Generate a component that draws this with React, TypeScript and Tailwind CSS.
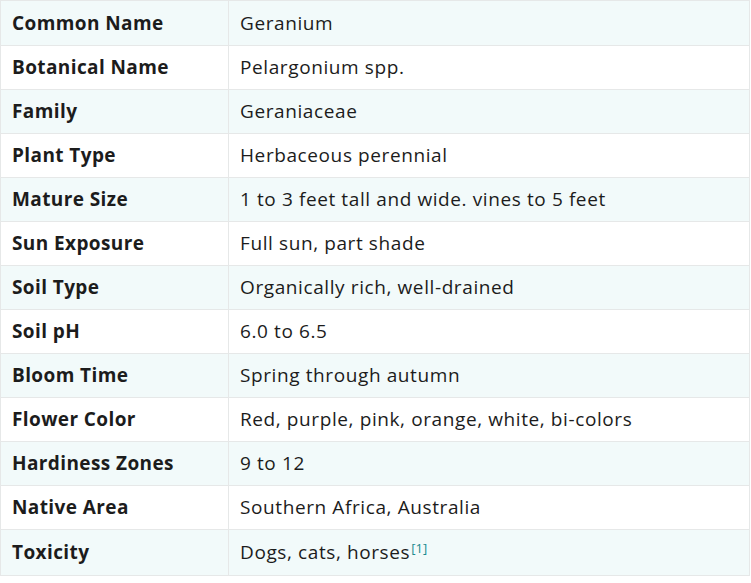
import React from "react";

const rows: [string, React.ReactNode][] = [
  ["Common Name", "Geranium"],
  ["Botanical Name", "Pelargonium spp."],
  ["Family", "Geraniaceae"],
  ["Plant Type", "Herbaceous perennial"],
  ["Mature Size", "1 to 3 feet tall and wide. vines to 5 feet"],
  ["Sun Exposure", "Full sun, part shade"],
  ["Soil Type", "Organically rich, well-drained"],
  ["Soil pH", "6.0 to 6.5"],
  ["Bloom Time", "Spring through autumn"],
  ["Flower Color", "Red, purple, pink, orange, white, bi-colors"],
  ["Hardiness Zones", "9 to 12"],
  ["Native Area", "Southern Africa, Australia"],
  [
    "Toxicity",
    <>
      Dogs, cats, horses
      <sup className="text-[13px] tracking-normal text-[#1b8a8f] ml-[1px] relative -top-[6px]">[1]</sup>
    </>,
  ],
];

export default function App() {
  return (
    <div className="bg-white w-[751px] h-[583px]" style={{ fontFamily: "'Open Sans', 'Liberation Sans', sans-serif" }}>
      <table className="w-[750px] border-collapse text-[19px] text-[#1c1c1c]">
        <tbody>
          {rows.map(([label, value], i) => {
            const h = i === 0 ? "h-[45px]" : i === rows.length - 1 ? "h-[46px]" : "h-[44px]";
            return (
              <tr key={label} className={i % 2 === 0 ? "bg-[#f2fafa]" : "bg-white"}>
                <td className={`w-[228px] ${h} border border-[#e6e8e8] pl-[11px] font-bold tracking-[0.4px] align-middle leading-none`}>
                  {label}
                </td>
                <td className={`${h} border border-[#e6e8e8] pl-[11px] tracking-[0.6px] align-middle leading-none`}>{value}</td>
              </tr>
            );
          })}
        </tbody>
      </table>
    </div>
  );
}
